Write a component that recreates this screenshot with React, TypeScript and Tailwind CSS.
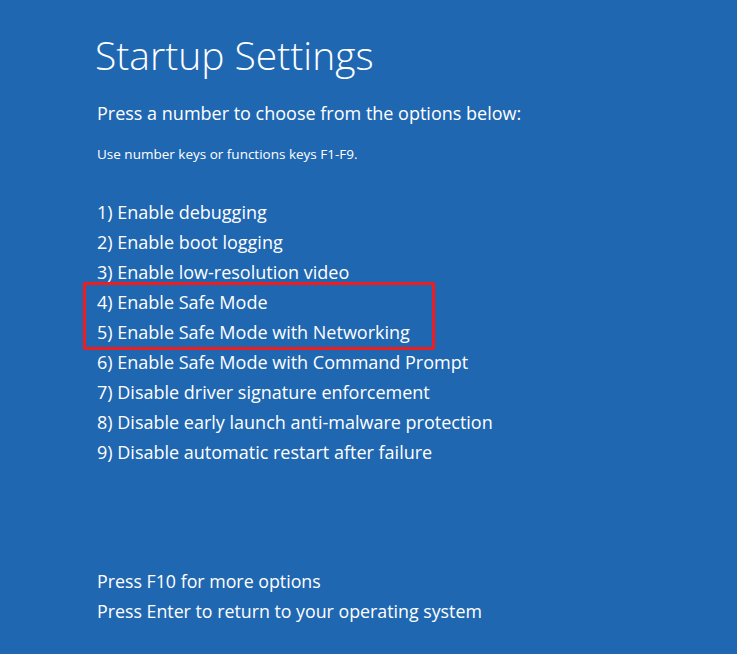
import React from 'react'

const options = [
  '1) Enable debugging',
  '2) Enable boot logging',
  '3) Enable low-resolution video',
  '4) Enable Safe Mode',
  '5) Enable Safe Mode with Networking',
  '6) Enable Safe Mode with Command Prompt',
  '7) Disable driver signature enforcement',
  '8) Disable early launch anti-malware protection',
  '9) Disable automatic restart after failure',
]

export default function App() {
  const font = { fontFamily: '"Segoe UI", "Open Sans", "Noto Sans", sans-serif' }

  return (
    <div className="w-[737px] h-[654px] bg-[#2067b2] text-white pl-[97px] flex flex-col" style={font}>
      <h1 className="text-[39px] font-light leading-[44px] mt-[33px] -ml-[2px]">Startup Settings</h1>
      <p className="text-[18px] leading-[24px] mt-[24px]">Press a number to choose from the options below:</p>
      <p className="text-[13.5px] leading-[16px] mt-[21px]">Use number keys or functions keys F1-F9.</p>

      <div className="mt-[35px] flex flex-col text-[18px] leading-[30px]">
        {options.slice(0, 3).map((o) => (
          <div key={o}>{o}</div>
        ))}
        <div className="relative">
          <div className="absolute -left-[14px] top-[-5px] w-[352px] h-[68px] border-[3px] border-[#f21c1c] rounded-[2px]" />
          {options.slice(3, 5).map((o) => (
            <div key={o}>{o}</div>
          ))}
        </div>
        {options.slice(5).map((o) => (
          <div key={o}>{o}</div>
        ))}
      </div>

      <div className="mt-auto mb-[28px] flex flex-col text-[17.8px] leading-[30px]">
        <div>Press F10 for more options</div>
        <div>Press Enter to return to your operating system</div>
      </div>
    </div>
  )
}
